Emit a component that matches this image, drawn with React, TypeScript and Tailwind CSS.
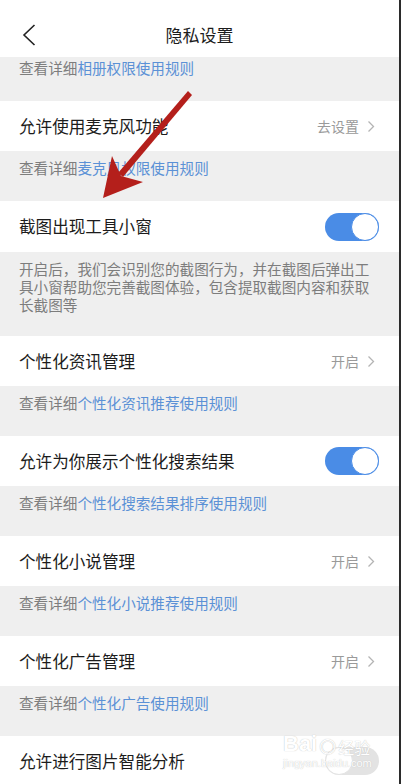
import React from 'react';

const FONT = "font-['Noto_Sans_CJK_SC','Noto_Sans',sans-serif]";

const Chevron: React.FC = () => (
	<svg width="8" height="13" viewBox="0 0 8 13" className="ml-[8px]">
		<path d="M1.5 1.5 L6.5 6.5 L1.5 11.5" fill="none" stroke="#b4b4b4" strokeWidth="1.3" />
	</svg>
);

const Toggle: React.FC<{ on?: boolean }> = ({ on = true }) =>
	on ? (
		<div className="flex h-[28px] w-[54px] items-center justify-end rounded-full bg-[#4a8ce6]">
			<div className="h-[28px] w-[28px] rounded-full border-[1.5px] border-[#4a8ce6] bg-white" />
		</div>
	) : (
		<div className="flex h-[28px] w-[54px] items-center justify-start rounded-full bg-[#e3e3e3]">
			<div className="h-[28px] w-[28px] rounded-full border-[1.5px] border-[#e3e3e3] bg-white" />
		</div>
	);

const Row: React.FC<{ label: string; value?: string; toggle?: boolean; off?: boolean; h?: string }> = ({
	label,
	value,
	toggle,
	off,
	h = 'h-[50px]',
}) => (
	<div className={`flex ${h} shrink-0 items-center justify-between bg-white pl-[19px] pr-[20px]`}>
		<span className="text-[16.6px] text-[#1c1c1c]">{label}</span>
		{value && (
			<span className="flex items-center pr-[4px] text-[14px] text-[#9a9a9a]">
				{value}
				<Chevron />
			</span>
		)}
		{toggle && <Toggle on={!off} />}
	</div>
);

const Note: React.FC<{ link: string; h?: string; pt?: string }> = ({ link, h = 'h-[50px]', pt = 'pt-[7px]' }) => (
	<div className={`${h} ${pt} shrink-0 bg-[#efefef] px-[19px] text-[14.6px] leading-[20px] text-[#7d7d7d]`}>
		查看详细<span className="text-[#5b91d6]">{link}</span>
	</div>
);

const App: React.FC = () => {
	return (
		<div className={`relative flex h-[784px] w-[401px] flex-col overflow-hidden border-r-2 border-[#2b2b2b] bg-white ${FONT}`}>
			{/* header */}
			<div className="grid h-[57px] shrink-0 grid-cols-[1fr_auto_1fr] items-center bg-white pt-[12px]">
				<div className="flex pl-[22px]">
					<svg width="14" height="22" viewBox="0 0 14 22">
						<path d="M12.5 1 L2 11 L12.5 21" fill="none" stroke="#222" strokeWidth="1.6" />
					</svg>
				</div>
				<div className="text-[17px] text-[#1c1c1c]">隐私设置</div>
				<div />
			</div>

			<Note link="相册权限使用规则" h="h-[44px]" pt="pt-[1px]" />
			<Row label="允许使用麦克风功能" value="去设置" />
			<Note link="麦克风权限使用规则" />
			<Row label="截图出现工具小窗" toggle h="h-[51px]" />
			<div className="h-[84px] shrink-0 bg-[#efefef] pl-[19px] pr-[26px] pt-[8px] text-[14.6px] leading-[18px] text-[#7d7d7d]">
				开启后，我们会识别您的截图行为，并在截图后弹出工具小窗帮助您完善截图体验，包含提取截图内容和获取长截图等
			</div>
			<Row label="个性化资讯管理" value="开启" />
			<Note link="个性化资讯推荐使用规则" />
			<Row label="允许为你展示个性化搜索结果" toggle />
			<Note link="个性化搜索结果排序使用规则" />
			<Row label="个性化小说管理" value="开启" />
			<Note link="个性化小说推荐使用规则" />
			<Row label="个性化广告管理" value="开启" />
			<Note link="个性化广告使用规则" />
			<Row label="允许进行图片智能分析" toggle off />

			{/* annotation arrow */}
			<svg className="pointer-events-none absolute left-0 top-0" width="401" height="784">
				<polygon points="188,91 192,95 123,177 118,173" fill="#b41f1b" />
				<polygon points="103,198 112,156 121,176 143,182" fill="#b41f1b" />
			</svg>

			{/* watermark */}
			<div className="pointer-events-none absolute left-[283px] top-[733px] flex flex-col items-start font-['Liberation_Sans',sans-serif] leading-none text-white [text-shadow:0_0_1px_#b5b5b5]">
				<div className="flex items-end">
					<span className="text-[22px] font-bold">Bai</span>
					<span className="ml-[2px] text-[20px]">◉</span>
					<span className={`ml-[2px] text-[16px] ${FONT}`}>经验</span>
				</div>
				<span className="mt-[3px] text-[11px]">jingyan.baidu.com</span>
			</div>
		</div>
	);
};

export default App;
